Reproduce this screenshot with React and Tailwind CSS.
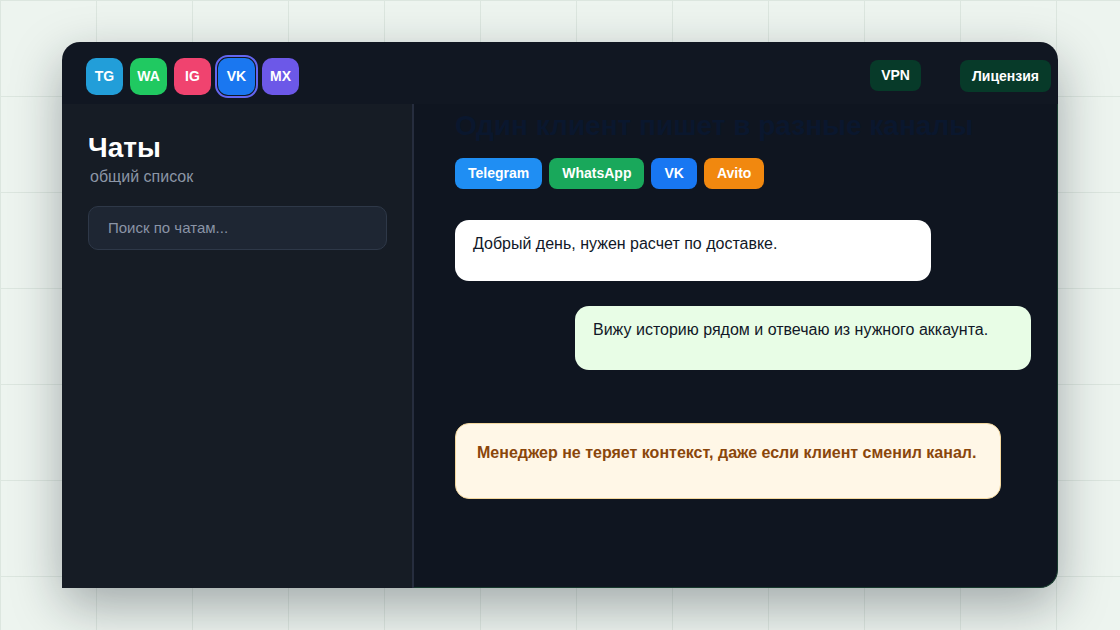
import React from 'react';

const sources = [
  { label: 'TG', color: 'bg-[#229ed9]' },
  { label: 'WA', color: 'bg-[#20c961]' },
  { label: 'IG', color: 'bg-[#f0436f]' },
  { label: 'VK', color: 'bg-[#1a77f0]', active: true },
  { label: 'MX', color: 'bg-[#6c58e8]' },
];

const channels = [
  { label: 'Telegram', color: 'bg-[#1f8ef3]' },
  { label: 'WhatsApp', color: 'bg-[#19a85b]' },
  { label: 'VK', color: 'bg-[#1877f2]' },
  { label: 'Avito', color: 'bg-[#f1880f]' },
];

export default function App() {
  return (
    <div className="h-screen w-full flex items-center justify-center bg-[#edf4ef] bg-[linear-gradient(to_right,#dce6df_1px,transparent_1px),linear-gradient(to_bottom,#dce6df_1px,transparent_1px)] bg-[size:96px_96px] font-['Liberation_Sans',Arial,sans-serif]">
      <div className="w-[996px] h-[546px] flex flex-col rounded-[18px] shadow-[0_18px_50px_rgba(20,30,40,0.35)]">
        {/* Top bar */}
        <div className="h-[62px] shrink-0 flex items-start justify-between bg-[#111722] rounded-t-[18px] pl-6 pr-[7px] pt-4">
          <div className="flex gap-[7px]">
            {sources.map((s) => (
              <div
                key={s.label}
                className={`w-[37px] h-[37px] rounded-[10px] flex items-center justify-center text-white text-[14px] font-bold ${s.color} ${
                  s.active ? 'outline-2 outline-offset-1 outline-[#6366f1]' : ''
                }`}
              >
                {s.label}
              </div>
            ))}
          </div>
          <div className="flex gap-[39px] pt-[2px]">
            <button className="h-[31px] px-[11px] rounded-[8px] bg-[#073a29] text-white text-[14px] font-bold">
              VPN
            </button>
            <button className="h-[32px] px-[12px] rounded-[8px] bg-[#073a29] text-white text-[14px] font-bold">
              Лицензия
            </button>
          </div>
        </div>

        <div className="flex flex-1 min-h-0">
          {/* Sidebar */}
          <div className="w-[352px] shrink-0 bg-[#161c25] border-r-2 border-[#262d3e] pl-[26px] pt-[27px]">
            <h1 className="text-[28px] leading-[34px] font-bold text-white">Чаты</h1>
            <p className="ml-[2px] text-[16px] leading-6 text-[#8c96a6]">общий список</p>
            <div className="mt-[17px] w-[299px] h-[44px] flex items-center pl-[19px] rounded-[10px] bg-[#1e2633] border border-[#2e3848] text-[15px] text-[#8a94a6]">
              Поиск по чатам...
            </div>
          </div>

          {/* Main */}
          <div className="flex-1 flex flex-col bg-[#0f1520] border-r border-b border-[#183a2e] rounded-br-[18px] pl-[41px] pr-[26px] pt-[5px]">
            <h2 className="text-[28px] leading-[34px] font-bold text-[#0a172e]">
              Один клиент пишет в разные каналы
            </h2>
            <div className="mt-[15px] flex gap-[7px]">
              {channels.map((c) => (
                <span
                  key={c.label}
                  className={`h-[31px] px-[13px] rounded-[8px] flex items-center text-white text-[14px] font-bold ${c.color}`}
                >
                  {c.label}
                </span>
              ))}
            </div>

            <div className="mt-[31px] w-[476px] h-[61px] rounded-[14px] bg-white px-[18px] pt-3 text-[16px] leading-6 text-[#111827]">
              Добрый день, нужен расчет по доставке.
            </div>

            <div className="mt-[25px] ml-auto w-[456px] h-[64px] rounded-[14px] bg-[#e8fde6] px-[18px] pt-3 text-[16px] leading-6 text-[#111827]">
              Вижу историю рядом и отвечаю из нужного аккаунта.
            </div>

            <div className="mt-[53px] w-[546px] h-[76px] rounded-[14px] bg-[#fff7e7] border border-[#f3d79e] px-[21px] pt-[17px] text-[16px] leading-6 font-bold text-[#8a460b]">
              Менеджер не теряет контекст, даже если клиент сменил канал.
            </div>
          </div>
        </div>
      </div>
    </div>
  );
}
